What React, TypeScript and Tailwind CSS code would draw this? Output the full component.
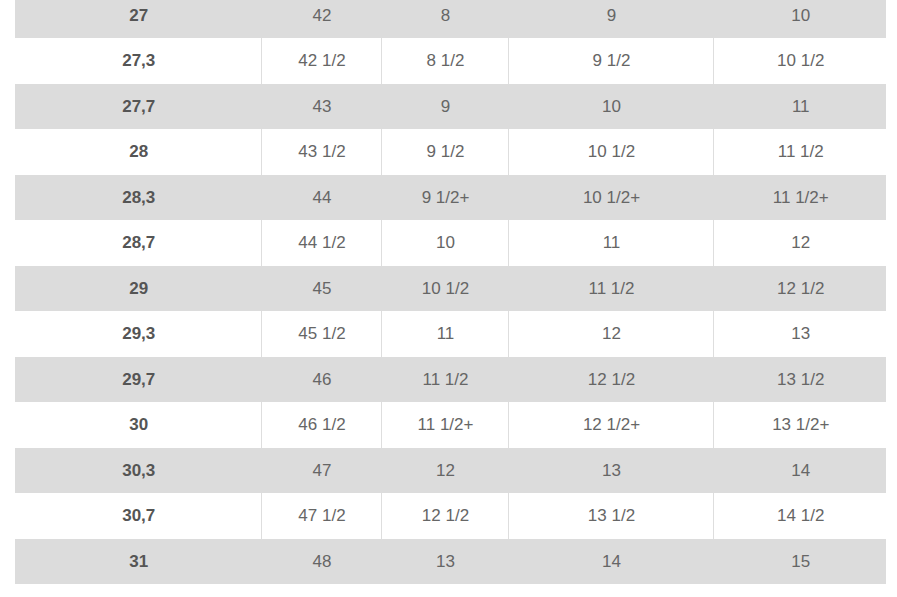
const rows: string[][] = [
  ["27", "42", "8", "9", "10"],
  ["27,3", "42 1/2", "8 1/2", "9 1/2", "10 1/2"],
  ["27,7", "43", "9", "10", "11"],
  ["28", "43 1/2", "9 1/2", "10 1/2", "11 1/2"],
  ["28,3", "44", "9 1/2+", "10 1/2+", "11 1/2+"],
  ["28,7", "44 1/2", "10", "11", "12"],
  ["29", "45", "10 1/2", "11 1/2", "12 1/2"],
  ["29,3", "45 1/2", "11", "12", "13"],
  ["29,7", "46", "11 1/2", "12 1/2", "13 1/2"],
  ["30", "46 1/2", "11 1/2+", "12 1/2+", "13 1/2+"],
  ["30,3", "47", "12", "13", "14"],
  ["30,7", "47 1/2", "12 1/2", "13 1/2", "14 1/2"],
  ["31", "48", "13", "14", "15"],
];

const widths = ["w-[246px]", "w-[120px]", "w-[127px]", "w-[205px]", "w-[173px]"];

export default function App() {
  return (
    <div className="h-[597px] w-[897px] overflow-hidden bg-white font-['Liberation_Sans',Arial,sans-serif]">
      <div className="-mt-[7.5px] pl-[15px]">
        <table className="w-[871px] table-fixed border-collapse text-[17px]">
          <colgroup>
            {widths.map((w, i) => (
              <col key={i} className={w} />
            ))}
          </colgroup>
          <tbody>
            {rows.map((r, i) => {
              const gray = i % 2 === 0;
              return (
                <tr key={i} className={gray ? "h-[45.5px] bg-[#dcdcdc]" : "h-[45.5px] bg-white"}>
                  {r.map((c, j) => (
                    <td
                      key={j}
                      className={
                        (j === 0 ? "font-bold text-[#555] " : "text-[#666] ") +
                        (gray ? "border-x border-[#dcdcdc] " : "border-x border-[#dedede] ") +
                        (j === 0 ? "border-l-0 " : "") +
                        (j === 4 ? "border-r-0 " : "") +
                        "p-0 pl-[2px] text-center align-middle"
                      }
                    >
                      {c}
                    </td>
                  ))}
                </tr>
              );
            })}
          </tbody>
        </table>
      </div>
    </div>
  );
}
